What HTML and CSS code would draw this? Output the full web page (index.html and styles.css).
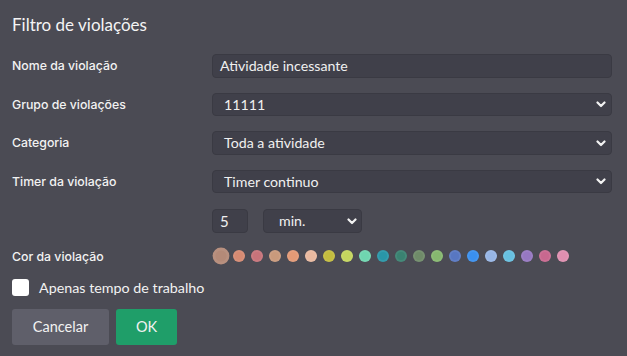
FILE: index.html
```html
<!DOCTYPE html>
<html lang="pt">
<head>
<meta charset="utf-8">
<title>Filtro de violações</title>
<link rel="stylesheet" href="styles.css">
</head>
<body>
<div class="dialog">
  <h1 class="title">Filtro de violações</h1>
  <div class="form">
    <div class="row">
      <label class="label">Nome da violação</label>
      <div class="field text">Atividade incessante</div>
    </div>
    <div class="row">
      <label class="label">Grupo de violações</label>
      <div class="field select"><span>11111</span><span class="chev"><svg width="10" height="7" viewBox="0 0 10 7"><path d="M1.5 1.5 L5 5 L8.5 1.5" fill="none" stroke="#f2f2f2" stroke-width="2.2" stroke-linecap="round" stroke-linejoin="round"/></svg></span></div>
    </div>
    <div class="row">
      <label class="label">Categoria</label>
      <div class="field select"><span>Toda a atividade</span><span class="chev"><svg width="10" height="7" viewBox="0 0 10 7"><path d="M1.5 1.5 L5 5 L8.5 1.5" fill="none" stroke="#f2f2f2" stroke-width="2.2" stroke-linecap="round" stroke-linejoin="round"/></svg></span></div>
    </div>
    <div class="row">
      <label class="label">Timer da violação</label>
      <div class="field select"><span>Timer continuo</span><span class="chev"><svg width="10" height="7" viewBox="0 0 10 7"><path d="M1.5 1.5 L5 5 L8.5 1.5" fill="none" stroke="#f2f2f2" stroke-width="2.2" stroke-linecap="round" stroke-linejoin="round"/></svg></span></div>
    </div>
    <div class="row numrow">
      <span class="label"></span>
      <div class="timer">
        <div class="field num">5</div>
        <div class="field select unit"><span>min.</span><span class="chev"><svg width="10" height="7" viewBox="0 0 10 7"><path d="M1.5 1.5 L5 5 L8.5 1.5" fill="none" stroke="#f2f2f2" stroke-width="2.2" stroke-linecap="round" stroke-linejoin="round"/></svg></span></div>
      </div>
    </div>
    <div class="row colorrow">
      <label class="label">Cor da violação</label>
      <div class="colors">
        <span class="dot selected" style="background:#b48a78"></span>
        <span class="dot" style="background:#d68a72"></span>
        <span class="dot" style="background:#c7737a"></span>
        <span class="dot" style="background:#c99a7c"></span>
        <span class="dot" style="background:#e39a76"></span>
        <span class="dot" style="background:#e9b9a0"></span>
        <span class="dot" style="background:#c4bd3e"></span>
        <span class="dot" style="background:#c5d65e"></span>
        <span class="dot" style="background:#6fd6b0"></span>
        <span class="dot" style="background:#2996a8"></span>
        <span class="dot" style="background:#3a8271"></span>
        <span class="dot" style="background:#6f8b69"></span>
        <span class="dot" style="background:#86b86f"></span>
        <span class="dot" style="background:#5877c2"></span>
        <span class="dot" style="background:#3a90f0"></span>
        <span class="dot" style="background:#97b6e6"></span>
        <span class="dot" style="background:#67c0e0"></span>
        <span class="dot" style="background:#9678c2"></span>
        <span class="dot" style="background:#c8688f"></span>
        <span class="dot" style="background:#e08fb0"></span>
      </div>
    </div>
  </div>
  <label class="check"><span class="box"></span><span>Apenas tempo de trabalho</span></label>
  <div class="buttons">
    <button class="btn cancel">Cancelar</button>
    <button class="btn ok">OK</button>
  </div>
</div>
</body>
</html>
```

FILE: styles.css
```css
html, body {
  margin: 0;
  padding: 0;
  background: #4b4b54;
}
body {
  font-family: Lato, "Noto Sans", sans-serif;
  color: #f2f2f2;
  width: 627px;
  height: 356px;
  overflow: hidden;
}
.dialog {
  padding: 13px 12px 0 12px;
}
.title {
  margin: 0;
  font-size: 17px;
  font-weight: 400;
  line-height: 24px;
  color: #f4f4f4;
}
.form {
  margin-top: 17px;
  display: flex;
  flex-direction: column;
  gap: 15px;
}
.row {
  display: grid;
  grid-template-columns: 200px 400px;
  align-items: center;
}
.label {
  font-family: Inter, "Noto Sans", sans-serif;
  font-size: 12.3px;
  font-weight: 500;
  color: #f2f2f2;
}
.field {
  box-sizing: border-box;
  height: 23.5px;
  background: #40404a;
  border: 1px solid #3a3a43;
  border-radius: 4px;
  font-size: 14.2px;
  color: #f0f0f0;
  display: flex;
  align-items: center;
}
.text {
  padding-left: 7px;
}
.select {
  padding-left: 11px;
  padding-right: 5px;
  justify-content: space-between;
}
.chev {
  display: flex;
  align-items: center;
  padding-top: 1px;
}
.numrow {
  margin-top: 1px;
}
.timer {
  display: flex;
  gap: 15px;
}
.num {
  width: 36px;
  padding-left: 7px;
  font-size: 15px;
}
.unit {
  width: 99px;
  padding-left: 15px;
  padding-right: 4px;
}
.colors {
  display: flex;
  align-items: center;
  gap: 6px;
  height: 17px;
  padding-left: 2.5px;
}
.dot {
  width: 12px;
  height: 12px;
  border-radius: 50%;
  display: inline-block;
  box-shadow: inset 0 0 0 2px rgba(255,255,255,0.06);
}
.dot.selected {
  transform: scale(1.4);
}
.check {
  display: flex;
  align-items: center;
  gap: 10px;
  margin-top: 14px;
  font-size: 14.3px;
  color: #f2f2f2;
}
.box {
  width: 17px;
  height: 17px;
  background: #ffffff;
  border-radius: 3px;
}
.buttons {
  margin-top: 13px;
  display: flex;
  gap: 7px;
}
.btn {
  height: 36px;
  border: none;
  border-radius: 3px;
  font-family: Lato, "Noto Sans", sans-serif;
  font-size: 14.5px;
  color: #f2f2f2;
}
.cancel {
  width: 97px;
  background: #5f5f6a;
}
.ok {
  width: 61px;
  background: #1f9e69;
}
```
